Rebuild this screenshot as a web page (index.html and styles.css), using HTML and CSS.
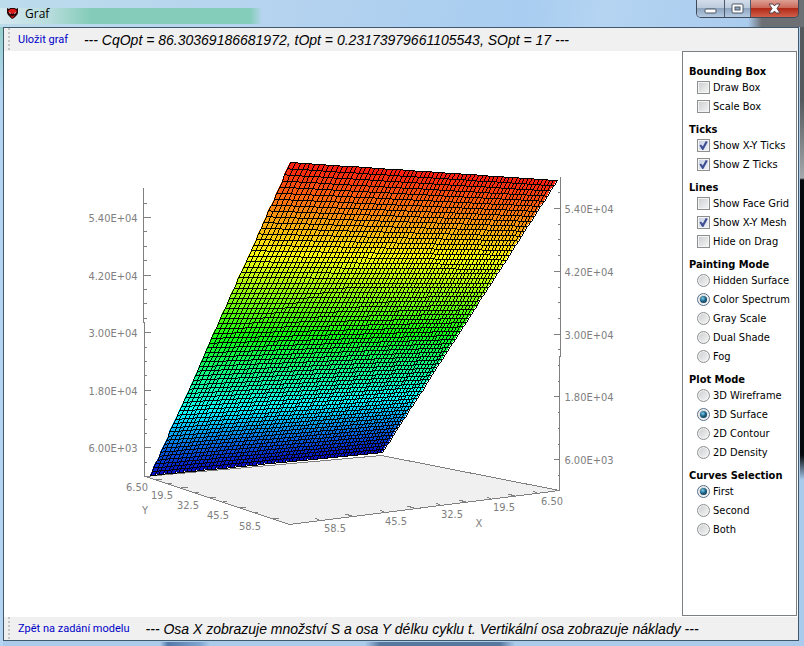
FILE: index.html
```html
<!DOCTYPE html>
<html lang="cs">

<head>
    <meta charset="UTF-8">
    <meta name="viewport" content="width=device-width, initial-scale=1.0">
    <title>Graf</title>
    <link rel="stylesheet" href="styles.css">
</head>

<body>
    <header class="titlebar">
        <svg class="app-icon" width="13" height="13" viewBox="0 0 13 13" aria-hidden="true">
            <path d="M1 1 L3 2 L4 1 L9 1 L10 2 L12 1 L12 6 L11 8 L8 11 L6 12 L5 11 L2 8 L1 6 Z" fill="#2a0505" />
            <path d="M3 3 L5 2 L8 2 L10 3 L11 5 L8 6 L7 7 L6 7 L5 6 L2 5 Z" fill="#e01818" />
            <path d="M4 8 L6 9 L7 9 L9 8 L7 11 L6 11 Z" fill="#b81414" />
            <path d="M3 5 L5 6 L5 7 L3 6 Z M10 5 L8 6 L8 7 L10 6 Z" fill="#e8b0b0" />
        </svg>
        <h1>Graf</h1>
        <div class="window-buttons">
            <button type="button" class="minimize" aria-label="Minimize">
                <svg width="13" height="11" viewBox="0 0 13 11"><rect x="1" y="6" width="11" height="4" rx="1" fill="#fff" stroke="#4b5665" /></svg>
            </button>
            <button type="button" class="maximize" aria-label="Maximize">
                <svg width="13" height="11" viewBox="0 0 13 11">
                    <rect x="1" y="1" width="11" height="9" rx="1" fill="#fff" stroke="#4b5665" />
                    <rect x="4" y="4" width="5" height="3" fill="#8ea6c0" stroke="#4b5665" />
                </svg>
            </button>
            <button type="button" class="close" aria-label="Close">
                <svg width="13" height="11" viewBox="0 0 13 11"><path d="M1 1 H5 L6.500 3 L8 1 H12 L9 5.500 L12 10 H8 L6.500 8 L5 10 H1 L4 5.500 Z" fill="#fff" stroke="#5a4048" /></svg>
            </button>
        </div>
    </header>

    <main class="window">
        <div class="toolbar">
            <button type="button">Uložit graf</button>
            <p>--- CqOpt = 86.30369186681972, tOpt = 0.23173979661105543, SOpt = 17 ---</p>
        </div>

        <div class="content">
            <!-- surface plot, filled in by plot.js -->
            <svg id="plot" class="plot" viewBox="4 51 678 566" role="img" aria-label="Graf"></svg>

            <form class="settings">
                <fieldset>
                    <legend>Bounding Box</legend>
                    <label><input type="checkbox" name="drawbox"> Draw Box</label>
                    <label><input type="checkbox" name="scalebox"> Scale Box</label>
                </fieldset>

                <fieldset>
                    <legend>Ticks</legend>
                    <label><input type="checkbox" name="xyticks" checked> Show X-Y Ticks</label>
                    <label><input type="checkbox" name="zticks" checked> Show Z Ticks</label>
                </fieldset>

                <fieldset>
                    <legend>Lines</legend>
                    <label><input type="checkbox" name="facegrid"> Show Face Grid</label>
                    <label><input type="checkbox" name="mesh" checked> Show X-Y Mesh</label>
                    <label><input type="checkbox" name="hide"> Hide on Drag</label>
                </fieldset>

                <fieldset>
                    <legend>Painting Mode</legend>
                    <label><input type="radio" name="painting"> Hidden Surface</label>
                    <label><input type="radio" name="painting" checked> Color Spectrum</label>
                    <label><input type="radio" name="painting"> Gray Scale</label>
                    <label><input type="radio" name="painting"> Dual Shade</label>
                    <label><input type="radio" name="painting"> Fog</label>
                </fieldset>

                <fieldset>
                    <legend>Plot Mode</legend>
                    <label><input type="radio" name="plotmode"> 3D Wireframe</label>
                    <label><input type="radio" name="plotmode" checked> 3D Surface</label>
                    <label><input type="radio" name="plotmode"> 2D Contour</label>
                    <label><input type="radio" name="plotmode"> 2D Density</label>
                </fieldset>

                <fieldset>
                    <legend>Curves Selection</legend>
                    <label><input type="radio" name="curves" checked> First</label>
                    <label><input type="radio" name="curves"> Second</label>
                    <label><input type="radio" name="curves"> Both</label>
                </fieldset>
            </form>
        </div>

        <div class="toolbar">
            <button type="button">Zpět na zadání modelu</button>
            <p>--- Osa X zobrazuje množství S a osa Y délku cyklu t. Vertikální osa zobrazuje náklady ---</p>
        </div>
    </main>

    <script src="plot.js"></script>
</body>

</html>
```

FILE: styles.css
```css
* {
    box-sizing: border-box;
    margin: 0;
    padding: 0;
}

body {
    display: flex;
    flex-direction: column;
    min-height: 100vh;
    font-family: 'DejaVu Sans Condensed', 'DejaVu Sans', sans-serif;
    font-size: 11px;
    color: #000;
    background:
        linear-gradient(#55585c 0, #55585c 100px, #a5a8aa 178px, #05080c 180px, #05080c 455px, #a9cbee 480px) right top / 4px 100% no-repeat,
        linear-gradient(#86cdb9 0, #b4d4f2 90px, #b4d4f2 100%) left top / 3px 100% no-repeat,
        linear-gradient(90deg, transparent 160px, #5279a8 168px, #7fa5cf 200px, transparent 210px, transparent 365px, #56789d 380px, #56789d 500px, transparent 515px) left bottom / 100% 4px no-repeat,
        #accbeb;
}

.titlebar {
    display: flex;
    align-items: center;
    height: 27px;
    padding-left: 6px;
    padding-right: 5px;
    background:
        linear-gradient(90deg, transparent, #6c6f73 14px) right top / 56px 100% no-repeat,
        linear-gradient(90deg, #d5e9f0 0, #b8dcdc 50px, #84ccb9 90px, #84cdba 250px, transparent 262px) left 8px / 262px 16px no-repeat,
        linear-gradient(100deg, #bcdcec 0, #b5d3ef 35%, #a8cdf0 65%, #b5d4f2 75%, #a5c8ec 100%);
}

.app-icon {
    margin-right: 6px;
}

h1 {
    font-family: 'Open Sans', sans-serif;
    font-size: 12px;
    font-weight: 400;
}

.window-buttons {
    display: flex;
    align-self: flex-start;
    height: 18px;
    margin-left: auto;
    border: 1px solid #3e4a58;
    border-top: none;
    border-radius: 0 0 5px 5px;
    overflow: hidden;
}

.window-buttons button {
    display: flex;
    align-items: center;
    justify-content: center;
    width: 28px;
    border: none;
    border-right: 1px solid #4c5a6b;
    background: linear-gradient(#d3deeb 0, #bccbdd 45%, #8fa5c0 50%, #b5cbe3 100%);
}

.window-buttons .maximize {
    width: 26px;
}

.window-buttons .close {
    width: 47px;
    border-right: none;
    background: linear-gradient(#dda095 0, #cc6a5a 45%, #b02a17 50%, #d0604a 100%);
}

.window {
    display: flex;
    flex: 1;
    flex-direction: column;
    margin: 0 5px 5px 3px;
    border: 1px solid #40586c;
    background-color: #fff;
}

.toolbar {
    display: flex;
    align-items: center;
    height: 23px;
    gap: 16px;
    padding-left: 14px;
    background:
        repeating-linear-gradient(#c4c4c4 0, #c4c4c4 2px, transparent 2px, transparent 4px) 4px 0 / 2px 100% no-repeat,
        #f0f0f0;
}

.toolbar button {
    border: none;
    background: none;
    color: #0000c8;
    font-family: Roboto, sans-serif;
    font-size: 11px;
    line-height: 16px;
}

.toolbar p {
    font-family: 'Liberation Sans', Arial, sans-serif;
    font-size: 14px;
    font-style: italic;
    line-height: 20px;
    white-space: nowrap;
}

.content {
    display: flex;
    flex: 1;
}

.plot {
    flex: 1;
    min-width: 0;
    font-size: 11px;
}

.mesh,
.axis,
.floor {
    fill: none;
    stroke: #000;
    shape-rendering: crispEdges;
}

.axis {
    stroke: #808080;
}

.floor {
    fill: #f0f0f0;
    stroke: #808080;
}

.band {
    shape-rendering: crispEdges;
}

.tick-label {
    fill: #808080;
    text-anchor: middle;
}

.settings {
    width: 115px;
    margin: 0 1px 1px 0;
    padding: 6px 0 0 6px;
    border: 1px solid #7b8085;
}

fieldset {
    border: none;
}

legend {
    padding-top: 8px;
    font-weight: 700;
    line-height: 12px;
    white-space: nowrap;
}

.settings label {
    display: flex;
    align-items: center;
    gap: 3px;
    height: 19px;
    padding-left: 8px;
    white-space: nowrap;
}

.settings input {
    display: grid;
    flex: none;
    place-items: center;
    width: 13px;
    height: 13px;
    appearance: none;
    border: 1px solid #8e8f8f;
    background: linear-gradient(135deg, #c9cccf, #f6f6f6);
    box-shadow: inset 0 0 0 1px #f4f4f4;
}

.settings input[type='radio'] {
    border-radius: 50%;
}

.settings input[type='checkbox']:checked {
    background: linear-gradient(135deg, #c4cde0, #f2f4fa);
}

.settings input[type='checkbox']:checked::before {
    content: '';
    width: 9px;
    height: 9px;
    background-color: #3f4f93;
    clip-path: polygon(5% 50%, 22% 38%, 42% 62%, 75% 0, 98% 8%, 48% 100%, 36% 100%);
}

.settings input[type='radio']:checked {
    border-color: #57718a;
}

.settings input[type='radio']:checked::before {
    content: '';
    width: 7px;
    height: 7px;
    border-radius: 50%;
    background: radial-gradient(circle at 40% 35%, #7fd0ea, #1c6285 45%, #0b3047 90%);
}
```

FILE: plot.js
```js
const plot = document.getElementById("plot");

// number of mesh cells in each direction
const CELLS = 64;

// projected corners of the surface
const topLeft = [290, 162];
const topRight = [557, 180];
const bottomRight = [382, 452];
const bottomLeft = [150, 475];

function add(tag, attrs, text) {
    const el = document.createElementNS("http://www.w3.org/2000/svg", tag);
    for (const key in attrs) {
        el.setAttribute(key, attrs[key]);
    }
    if (text) {
        el.textContent = text;
    }
    plot.appendChild(el);
}

// perspective mapping of (u, v) in 0..1 to the screen
const dx1 = topRight[0] - bottomRight[0];
const dx2 = bottomLeft[0] - bottomRight[0];
const dy1 = topRight[1] - bottomRight[1];
const dy2 = bottomLeft[1] - bottomRight[1];
const sx = topLeft[0] - topRight[0] + bottomRight[0] - bottomLeft[0];
const sy = topLeft[1] - topRight[1] + bottomRight[1] - bottomLeft[1];
const det = dx1 * dy2 - dx2 * dy1;
const g = (sx * dy2 - dx2 * sy) / det;
const h = (dx1 * sy - sx * dy1) / det;

function project(u, v) {
    const w = 1 + g * u + h * v;
    return [0, 1].map(i => {
        const a = topRight[i] * (1 + g) - topLeft[i];
        const b = bottomLeft[i] * (1 + h) - topLeft[i];
        return Math.round((topLeft[i] + a * u + b * v) / w);
    });
}

function row(v) {
    const points = [];
    for (let i = 0; i <= CELLS; i++) {
        points.push(project(i / CELLS, v));
    }
    return points;
}

function column(u) {
    const points = [];
    for (let i = 0; i <= CELLS; i++) {
        points.push(project(u, i / CELLS));
    }
    return points;
}

// path through the points in single pixel steps, so the mesh stays thin
function pixelPath(points) {
    let d = "";
    for (let i = 1; i < points.length; i++) {
        const [x1, y1] = points[i - 1];
        const [x2, y2] = points[i];
        const steps = Math.max(Math.abs(x2 - x1), Math.abs(y2 - y1));
        for (let s = 0; s <= steps; s++) {
            const t = steps ? s / steps : 0;
            const x = Math.round(x1 + (x2 - x1) * t);
            const y = Math.round(y1 + (y2 - y1) * t);
            d += `M${x} ${y + 0.5}h1`;
        }
    }
    return d;
}

function label(x, y, text) {
    add("text", { x: x, y: y, class: "tick-label" }, text);
}

// floor
add("path", { d: "M145.5 476.500 L289.500 524.500 L559.500 490.500 L381.500 455.500 Z", class: "floor" });

// coloured bands, red on top to blue at the bottom
for (let i = 0; i < CELLS; i++) {
    const v = i / CELLS;
    const light = v > 0.75 ? 52 - (v - 0.75) * 50 : 52;
    const points = row(v).concat(row((i + 1) / CELLS).reverse());
    add("polygon", { points: points.join(" "), fill: `hsl(${4 + v * 236}, 96%, ${light}%)`, class: "band" });
}

// mesh
for (let i = 0; i <= CELLS; i++) {
    add("path", { d: pixelPath(row(i / CELLS)), class: "mesh" });
    add("path", { d: pixelPath(column(i / CELLS)), class: "mesh" });
}

// vertical axes
add("path", { d: "M143.5 188 V322 H144.5 V477", class: "axis" });
add("path", { d: "M560.5 177 V356 H559.5 V491", class: "axis" });

const zLabels = ["5.40E+04", "4.20E+04", "3.00E+04", "1.80E+04", "6.00E+03"];
for (let i = -1; i <= 17; i++) {
    const major = i % 4 === 0;
    const left = Math.round(217 + i * 14.4) + 0.5;
    const right = Math.round(208 + i * 15.7) + 0.5;
    add("path", { d: `M144 ${left} h${major ? 7 : 3}`, class: "axis" });
    add("path", { d: `M560 ${right} h${major ? -6 : -2}`, class: "axis" });
    if (major) {
        label(113, left + 4.5, zLabels[i / 4]);
        label(589, right + 4.5, zLabels[i / 4]);
    }
}

// ticks along the floor edges
[[155, 480], [168, 484], [181, 488], [195, 493], [209, 498], [223, 502], [239, 508], [254, 513], [272, 519]].forEach((p, i) => {
    add("path", { d: `M${p[0]} ${p[1]} l${i % 2 ? 4 : 7} -1`, class: "axis" });
});
[[319, 520], [352, 516], [384, 512], [414, 508], [440, 505], [466, 502], [491, 499], [515, 496], [537, 493]].forEach((p, i) => {
    add("path", { d: `M${p[0]} ${p[1]} l${i % 2 ? -7 : -4} -2`, class: "axis" });
});

label(137, 491, "6.50");
label(162, 499, "19.5");
label(188, 509, "32.5");
label(218, 519, "45.5");
label(250, 530, "58.5");
label(145, 514, "Y");

label(335, 532, "58.5");
label(396, 525, "45.5");
label(452, 518, "32.5");
label(504, 511, "19.5");
label(552, 505, "6.50");
label(479, 527, "X");
```
